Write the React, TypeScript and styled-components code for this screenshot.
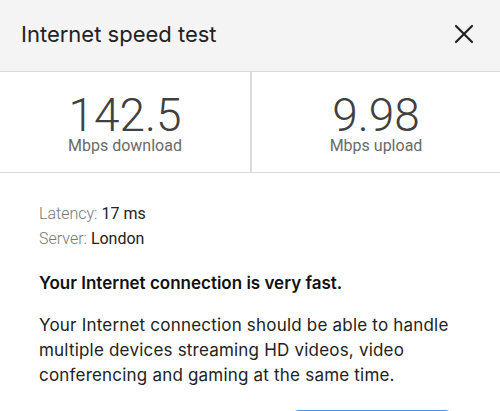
import React from "react"
import styled, { createGlobalStyle } from "styled-components"

const GlobalStyle = createGlobalStyle`
  html, body {
    margin: 0;
    padding: 0;
    background: #ffffff;
    font-family: Inter, Roboto, "Liberation Sans", Arial, sans-serif;
    -webkit-font-smoothing: antialiased;
  }
`

const Sheet = styled.div`
  display: flex;
  flex-direction: column;
  width: 500px;
  background: #ffffff;
`

const Header = styled.header`
  display: flex;
  align-items: center;
  justify-content: space-between;
  height: 71px;
  padding: 0 24px 0 21px;
  background: #f4f4f4;
  border-bottom: 1px solid #d9d9d9;
`

const Title = styled.h1`
  margin: 0;
  font-size: 22px;
  font-weight: 400;
  color: #222222;
  padding-bottom: 3px;
`

const CloseButton = styled.button`
  display: flex;
  align-items: center;
  justify-content: center;
  width: 24px;
  height: 24px;
  margin-bottom: 4px;
  padding: 0;
  border: none;
  background: transparent;
  cursor: pointer;
`

const Stats = styled.div`
  display: grid;
  grid-template-columns: 1fr 1fr;
  height: 100px;
  border-bottom: 1px solid #d9d9d9;
`

const Stat = styled.div<{ $divider?: boolean }>`
  display: flex;
  flex-direction: column;
  align-items: center;
  justify-content: center;
  gap: 2px;
  padding-top: 6px;
  border-left: ${({ $divider }) => ($divider ? "2px solid #dcdcdc" : "none")};
  font-family: Roboto, "Liberation Sans", Arial, sans-serif;
`

const Value = styled.div`
  font-size: 46px;
  font-weight: 300;
  line-height: 40px;
  color: #404040;
`

const Unit = styled.div`
  font-size: 16px;
  line-height: 18px;
  color: #6a6a6a;
`

const Body = styled.div`
  display: flex;
  flex-direction: column;
  padding: 28px 30px 0 39px;
`

const InfoLine = styled.div`
  font-family: Roboto, "Liberation Sans", Arial, sans-serif;
  font-size: 16px;
  line-height: 25px;
  color: #222222;
`

const InfoLabel = styled.span`
  color: #777777;
  font-weight: 300;
`

const Verdict = styled.p`
  margin: 20px 0 0;
  font-size: 17px;
  font-weight: 600;
  line-height: 24px;
  color: #111111;
`

const Description = styled.p`
  margin: 18px 0 0;
  font-size: 17px;
  letter-spacing: 0.2px;
  line-height: 25px;
  color: #222222;
`

const Actions = styled.div`
  display: flex;
  justify-content: flex-end;
  padding: 22px 47px 20px 0;
`

const PrimaryButton = styled.button`
  width: 162px;
  height: 44px;
  border: none;
  border-radius: 8px;
  background: #4a8ee6;
  color: #ffffff;
  font-family: inherit;
  font-size: 16px;
`

export default function App() {
  return (
    <>
      <GlobalStyle />
      <Sheet>
        <Header>
          <Title>Internet speed test</Title>
          <CloseButton aria-label="Close">
            <svg width="20" height="20" viewBox="0 0 20 20">
              <path d="M2 2 L18 18 M18 2 L2 18" stroke="#222" strokeWidth="2.2" strokeLinecap="round" />
            </svg>
          </CloseButton>
        </Header>
        <Stats>
          <Stat>
            <Value>142.5</Value>
            <Unit>Mbps download</Unit>
          </Stat>
          <Stat $divider>
            <Value>9.98</Value>
            <Unit>Mbps upload</Unit>
          </Stat>
        </Stats>
        <Body>
          <InfoLine>
            <InfoLabel>Latency:</InfoLabel> 17 ms
          </InfoLine>
          <InfoLine>
            <InfoLabel>Server:</InfoLabel> London
          </InfoLine>
          <Verdict>Your Internet connection is very fast.</Verdict>
          <Description>
            Your Internet connection should be able to handle multiple devices streaming HD videos, video
            conferencing and gaming at the same time.
          </Description>
        </Body>
        <Actions>
          <PrimaryButton>Test again</PrimaryButton>
        </Actions>
      </Sheet>
    </>
  )
}
